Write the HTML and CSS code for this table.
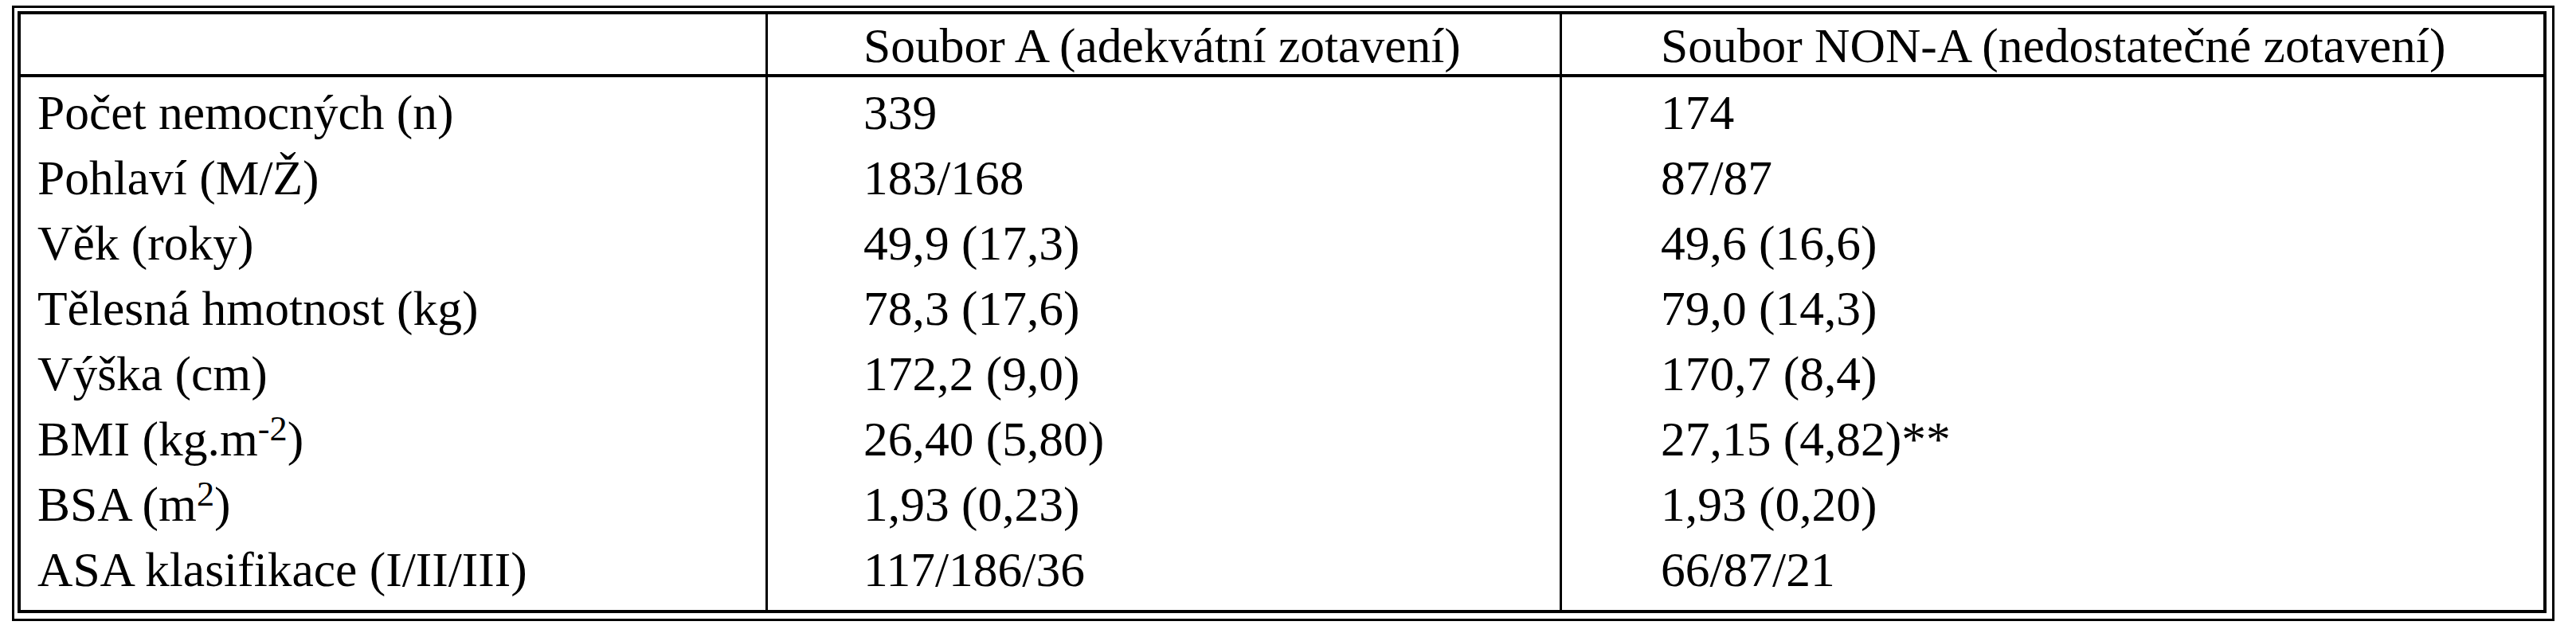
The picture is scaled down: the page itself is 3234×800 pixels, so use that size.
FILE: index.html
```html
<!DOCTYPE html>
<html lang="cs">
<head>
<meta charset="utf-8">
<title>Soubor A / NON-A</title>
<link rel="stylesheet" href="styles.css">
</head>
<body>
<div class="frame">
  <table class="data">
    <colgroup>
      <col class="c0">
      <col class="c1">
      <col class="c2">
    </colgroup>
    <thead>
      <tr>
        <th class="label"></th>
        <th class="val a">Soubor A (adekvátní zotavení)</th>
        <th class="val b">Soubor NON-A (nedostatečné zotavení)</th>
      </tr>
    </thead>
    <tbody>
      <tr class="first">
        <td class="label">Počet nemocných (n)</td>
        <td class="val a">339</td>
        <td class="val b">174</td>
      </tr>
      <tr>
        <td class="label">Pohlaví (M/Ž)</td>
        <td class="val a">183/168</td>
        <td class="val b">87/87</td>
      </tr>
      <tr>
        <td class="label">Věk (roky)</td>
        <td class="val a">49,9 (17,3)</td>
        <td class="val b">49,6 (16,6)</td>
      </tr>
      <tr>
        <td class="label">Tělesná hmotnost (kg)</td>
        <td class="val a">78,3 (17,6)</td>
        <td class="val b">79,0 (14,3)</td>
      </tr>
      <tr>
        <td class="label">Výška (cm)</td>
        <td class="val a">172,2 (9,0)</td>
        <td class="val b">170,7 (8,4)</td>
      </tr>
      <tr>
        <td class="label">BMI (kg.m<sup>-2</sup>)</td>
        <td class="val a">26,40 (5,80)</td>
        <td class="val b">27,15 (4,82)**</td>
      </tr>
      <tr>
        <td class="label">BSA (m<sup>2</sup>)</td>
        <td class="val a">1,93 (0,23)</td>
        <td class="val b">1,93 (0,20)</td>
      </tr>
      <tr class="last">
        <td class="label">ASA klasifikace (I/II/III)</td>
        <td class="val a">117/186/36</td>
        <td class="val b">66/87/21</td>
      </tr>
    </tbody>
  </table>
</div>
</body>
</html>
```

FILE: styles.css
```css
html, body {
  margin: 0;
  padding: 0;
  background: #fff;
}

body {
  padding: 7px 0 0 15px;
  font-family: "Liberation Serif", "Times New Roman", serif;
  color: #000;
}

.frame {
  box-sizing: border-box;
  width: 3192px;
  border: 3px solid #000;
  padding: 4px 7px 7px 4px;
}

.data {
  width: 100%;
  table-layout: fixed;
  border-collapse: separate;
  border-spacing: 0;
  border: 4px solid #000;
  font-size: 61.5px;
}

.c0 { width: 935px; }
.c1 { width: 997px; }

.data th,
.data td {
  padding: 0;
  text-align: left;
  font-weight: normal;
  white-space: nowrap;
  vertical-align: top;
}

.data th {
  height: 72px;
  line-height: 72px;
  padding-top: 3px;
  border-bottom: 4px solid #000;
}

.data td {
  height: 82px;
  line-height: 82px;
}

.data .label { padding-left: 21px; }
.data .val { border-left: 3px solid #000; }
.data .a { padding-left: 120px; }
.data .b { padding-left: 124px; }

.data tr.first td { padding-top: 3px; }
.data tr.last td { padding-bottom: 10px; }

.data sup {
  font-size: 0.72em;
  line-height: 0;
  vertical-align: 0.42em;
}
```
